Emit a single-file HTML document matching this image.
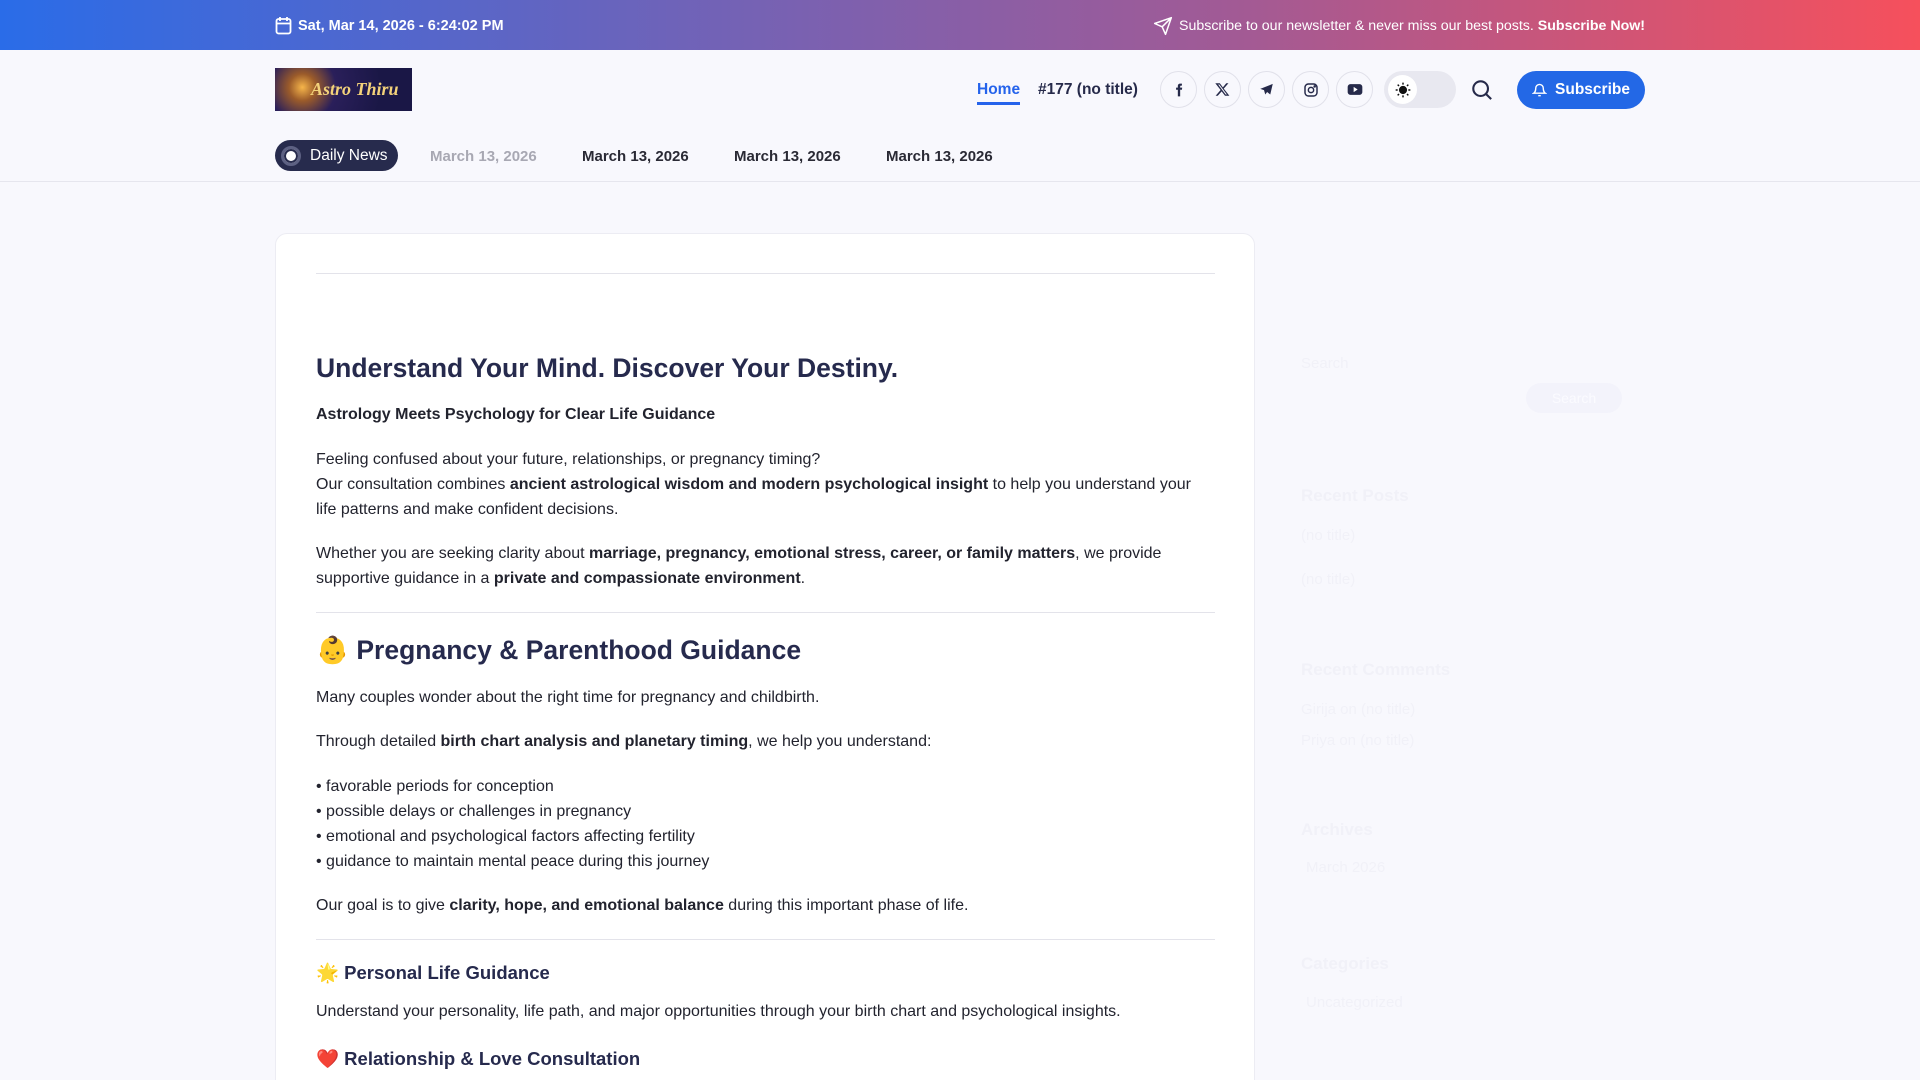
<!DOCTYPE html>
<html><head><meta charset="utf-8"><style>
*{box-sizing:border-box;margin:0;padding:0}
html,body{width:1920px;height:1080px;overflow:hidden}
body{background:#f8f8fd;font-family:"Liberation Sans",Arial,sans-serif;color:#1f2937;position:relative}
.top{position:absolute;left:0;top:0;width:1920px;height:50px;background:linear-gradient(90deg,#2a6ce8 0%,#6e63b9 35%,#a35a94 65%,#f6505c 100%);color:#fff;font-size:14.2px}
.top .l{position:absolute;left:275px;top:16px;font-weight:bold;display:flex;align-items:center;gap:6px;font-size:14.5px}
.top .r{position:absolute;right:275px;top:16px;display:flex;align-items:center;gap:6px}
.abs{position:absolute}
.nav{font-size:15.5px;font-weight:bold;color:#262a4a}
.soc{position:absolute;top:71px;width:37px;height:37px;border:1px solid #e1e1ea;border-radius:50%;display:flex;align-items:center;justify-content:center}
.card{position:absolute;left:275px;top:233px;width:980px;height:900px;background:#fff;border:1px solid #ececf3;border-radius:12px}
.c{position:absolute;left:316px;width:899px;font-size:16px;line-height:25px;color:#22232e}
.c b{font-weight:bold}
h1,h2,h3{color:#262a4d;font-weight:bold}
.hr{position:absolute;left:316px;width:899px;height:1px;background:#e3e3ea}
.sb{position:absolute;left:1301px;color:#f1f1f8;font-size:15px}
.sbh{position:absolute;left:1301px;color:#f1f1f8;font-size:17px;font-weight:bold}
</style></head><body>
<div class="top">
 <div class="l"><svg width="17" height="19" viewBox="0 0 17 19" fill="none" stroke="#fff" stroke-width="1.8"><rect x="1.5" y="3" width="14" height="14.5" rx="2"/><path d="M1.5 7.5h14M5 1v4M12 1v4"/></svg>Sat, Mar 14, 2026 - 6:24:02 PM</div>
 <div class="r"><svg width="20" height="20" viewBox="0 0 24 24" fill="none" stroke="#fff" stroke-width="1.8" stroke-linejoin="round"><path d="M22 2L11 13M22 2l-7 20-4-9-9-4z"/></svg><span>Subscribe to our newsletter &amp; never miss our best posts. <b>Subscribe Now!</b></span></div>
</div>
<div class="abs" style="left:275px;top:68px;width:137px;height:43px;background:radial-gradient(circle at 20% 45%,#f6b54a 0,#9b5b2a 12%,#2a1f5a 30%,#1a1746 70%);overflow:hidden"><span style="position:absolute;left:36px;top:11px;white-space:nowrap;font-family:'Liberation Serif',serif;font-style:italic;font-weight:bold;color:#f3d27a;font-size:18px">Astro Thiru</span></div>
<div class="abs nav" style="left:977px;top:81px;color:#2563eb">Home<div style="height:3px;background:#2563eb;margin-top:3px"></div></div>
<div class="abs nav" style="left:1038px;top:81px">#177 (no title)</div>
<div class="soc" style="left:1160px"><svg width="14" height="16" viewBox="0 0 24 24" fill="#262a4a"><path d="M14 8V6c0-1 .5-1.5 1.5-1.5H17V1h-3c-3 0-4 2-4 4.5V8H7v3.5h3V23h4V11.5h3l.5-3.5z"/></svg></div>
<div class="soc" style="left:1204px"><svg width="15" height="15" viewBox="0 0 24 24" fill="#262a4a"><path d="M18 2h3.5l-7.5 8.6L23 22h-7l-5.4-7-6.2 7H1l8-9.2L0.5 2h7.2l4.9 6.5zM17 20h2L7 4H5z"/></svg></div>
<div class="soc" style="left:1248px"><svg width="15" height="15" viewBox="0 0 24 24" fill="#262a4a"><path d="M22 3L2 11l6 2 2 7 3-4 5 4z"/></svg></div>
<div class="soc" style="left:1292px"><svg width="16" height="16" viewBox="0 0 24 24" fill="none" stroke="#262a4a" stroke-width="2.2"><rect x="3" y="3" width="18" height="18" rx="5"/><circle cx="12" cy="12" r="4"/><circle cx="17.5" cy="6.5" r=".8" fill="#262a4a"/></svg></div>
<div class="soc" style="left:1336px"><svg width="16" height="13" viewBox="0 0 24 18" ><rect x="1" y="1" width="22" height="16" rx="4" fill="#262a4a"/><path d="M10 5v8l6-4z" fill="#fff"/></svg></div>
<div class="abs" style="left:1384px;top:71px;width:72px;height:37px;border-radius:19px;background:#e8e8f0"><div style="position:absolute;left:4px;top:4px;width:29px;height:29px;border-radius:50%;background:#fff;display:flex;align-items:center;justify-content:center"><svg width="16" height="16" viewBox="0 0 24 24" stroke="#111" stroke-width="2.2"><circle cx="12" cy="12" r="5" fill="#111"/><path d="M12 1v3M12 20v3M1 12h3M20 12h3M4 4l2 2M18 18l2 2M4 20l2-2M18 6l2-2"/></svg></div></div>
<svg class="abs" style="left:1471px;top:79px" width="22" height="22" viewBox="0 0 24 24" fill="none" stroke="#262a4a" stroke-width="2.3"><circle cx="10.5" cy="10.5" r="8"/><path d="M16.5 16.5l5.5 5.5"/></svg>
<div class="abs" style="left:1517px;top:71px;width:128px;height:38px;border-radius:19px;background:#2368e6;color:#fff;font-weight:bold;font-size:15.5px;display:flex;align-items:center;justify-content:center;gap:8px"><svg width="15" height="16" viewBox="0 0 24 24" fill="none" stroke="#fff" stroke-width="2.2"><path d="M6 9a6 6 0 0112 0c0 6 3 8 3 8H3s3-2 3-8M10 21h4"/></svg>Subscribe</div>
<div class="abs" style="left:275px;top:140px;width:123px;height:31px;border-radius:16px;background:#272b4d;color:#fff;font-size:15.5px;display:flex;align-items:center;padding-left:6px;gap:9px"><span style="width:20px;height:20px;border-radius:50%;border:3px solid #5d6183;background:#fff;box-shadow:inset 0 0 0 2px #272b4d"></span>Daily News</div>
<div class="abs nav" style="left:430px;top:148px;color:#a8a8b3;font-size:15px">March 13, 2026</div>
<div class="abs nav" style="left:582px;top:148px;font-size:15px;color:#2a2a35">March 13, 2026</div>
<div class="abs nav" style="left:734px;top:148px;font-size:15px;color:#2a2a35">March 13, 2026</div>
<div class="abs nav" style="left:886px;top:148px;font-size:15px;color:#2a2a35">March 13, 2026</div>
<div class="abs" style="left:0;top:181px;width:1920px;height:1px;background:#e6e6ee"></div>
<div class="card" style="height:860px"></div>
<div class="hr" style="top:273px"></div>
<h1 class="c" style="top:351px;font-size:26.5px;line-height:34px;color:#262a4d">Understand Your Mind. Discover Your Destiny.</h1>
<div class="c" style="top:402px"><b>Astrology Meets Psychology for Clear Life Guidance</b></div>
<div class="c" style="top:447px">Feeling confused about your future, relationships, or pregnancy timing?<br>Our consultation combines <b>ancient astrological wisdom and modern psychological insight</b> to help you understand your life patterns and make confident decisions.</div>
<div class="c" style="top:541px">Whether you are seeking clarity about <b>marriage, pregnancy, emotional stress, career, or family matters</b>, we provide supportive guidance in a <b>private and compassionate environment</b>.</div>
<div class="hr" style="top:612px"></div>
<h2 class="c" style="top:633px;font-size:26.5px;line-height:34px;color:#262a4d">👶 Pregnancy &amp; Parenthood Guidance</h2>
<div class="c" style="top:685px">Many couples wonder about the right time for pregnancy and childbirth.</div>
<div class="c" style="top:729px">Through detailed <b>birth chart analysis and planetary timing</b>, we help you understand:</div>
<div class="c" style="top:774px">• favorable periods for conception<br>• possible delays or challenges in pregnancy<br>• emotional and psychological factors affecting fertility<br>• guidance to maintain mental peace during this journey</div>
<div class="c" style="top:893px">Our goal is to give <b>clarity, hope, and emotional balance</b> during this important phase of life.</div>
<div class="hr" style="top:939px"></div>
<h3 class="c" style="top:960px;font-size:18.5px;color:#262a4d">🌟 Personal Life Guidance</h3>
<div class="c" style="top:999px">Understand your personality, life path, and major opportunities through your birth chart and psychological insights.</div>
<h3 class="c" style="top:1046px;font-size:18.5px;color:#262a4d">❤️ Relationship &amp; Love Consultation</h3>
<div class="sb" style="top:355px">Search</div>
<div class="abs" style="left:1526px;top:383px;width:96px;height:30px;border-radius:15px;background:#f3f3fb;color:#fbfbff;font-size:14px;text-align:center;line-height:30px">Search</div>
<div class="sbh" style="top:486px">Recent Posts</div>
<div class="sb" style="top:527px">(no title)</div>
<div class="sb" style="top:571px">(no title)</div>
<div class="sbh" style="top:660px">Recent Comments</div>
<div class="sb" style="top:701px">Girija on (no title)</div>
<div class="sb" style="top:732px">Priya on (no title)</div>
<div class="sbh" style="top:820px">Archives</div>
<div class="sb" style="top:859px;left:1306px">March 2026</div>
<div class="sbh" style="top:954px">Categories</div>
<div class="sb" style="top:994px;left:1306px">Uncategorized</div>
</body></html>
